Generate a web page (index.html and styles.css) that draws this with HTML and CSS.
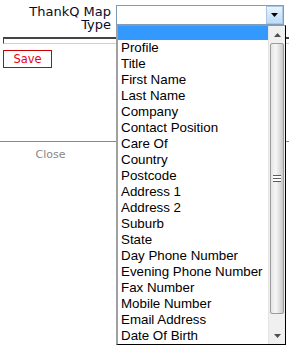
FILE: index.html
```html
<!DOCTYPE html>
<html>
<head>
<meta charset="utf-8">
<link rel="stylesheet" href="styles.css">
</head>
<body>
<div class="page">
  <div class="row">
    <label class="lbl">ThankQ Map Type</label>
    <div class="select">
      <div class="select-btn">
        <svg width="7" height="4" viewBox="0 0 7 4"><polygon points="0,0 7,0 3.5,4" fill="#000"/></svg>
      </div>
      <div class="listbox">
        <div class="options">
          <div class="opt sel"></div>
          <div class="opt">Profile</div>
          <div class="opt">Title</div>
          <div class="opt">First Name</div>
          <div class="opt">Last Name</div>
          <div class="opt">Company</div>
          <div class="opt">Contact Position</div>
          <div class="opt">Care Of</div>
          <div class="opt">Country</div>
          <div class="opt">Postcode</div>
          <div class="opt">Address 1</div>
          <div class="opt">Address 2</div>
          <div class="opt">Suburb</div>
          <div class="opt">State</div>
          <div class="opt">Day Phone Number</div>
          <div class="opt">Evening Phone Number</div>
          <div class="opt">Fax Number</div>
          <div class="opt">Mobile Number</div>
          <div class="opt">Email Address</div>
          <div class="opt">Date Of Birth</div>
        </div>
        <div class="sbar">
          <div class="sbtn">
            <svg width="7" height="4" viewBox="0 0 7 4"><polygon points="0,4 7,4 3.5,0" fill="#505050"/></svg>
          </div>
          <div class="strack">
            <div class="thumb"><span class="grip"></span></div>
          </div>
          <div class="sbtn">
            <svg width="7" height="4" viewBox="0 0 7 4"><polygon points="0,0 7,0 3.5,4" fill="#505050"/></svg>
          </div>
        </div>
      </div>
    </div>
  </div>
  <div class="field"></div>
  <button class="save">Save</button>
  <div class="footer"><span class="close">Close</span></div>
</div>
</body>
</html>
```

FILE: styles.css
```css
html, body {
  margin: 0;
  padding: 0;
  background: #fff;
}
body {
  font-family: "DejaVu Sans", Verdana, sans-serif;
  width: 289px;
  height: 353px;
  overflow: hidden;
}
.page {
  padding-top: 5px;
}
.row {
  display: flex;
  align-items: flex-start;
  gap: 5px;
}
.lbl {
  width: 111px;
  text-align: right;
  font-size: 13px;
  line-height: 13px;
  color: #0a0a1e;
}
.select {
  position: relative;
  width: 168px;
  height: 20px;
  box-sizing: border-box;
  border: 1px solid #7f9db9;
  background: #fff;
  display: flex;
  justify-content: flex-end;
}
.select-btn {
  width: 17px;
  height: 18px;
  box-sizing: border-box;
  border: 1px solid #a9c6e6;
  background: linear-gradient(#eaf4fd, #cfe6fa 50%, #bcdcf6);
  display: flex;
  align-items: center;
  justify-content: center;
}
.listbox {
  position: absolute;
  left: -1px;
  top: 19px;
  width: 170px;
  height: 320px;
  box-sizing: border-box;
  border: 1px solid #000;
  border-top: 1px solid #7f9db9;
  border-left: 2px solid #a0a0a0;
  background: #fff;
  display: flex;
  z-index: 10;
}
.options {
  flex: 1;
  overflow: hidden;
}
.opt {
  height: 16px;
  line-height: 16px;
  padding-left: 3px;
  font-family: "Liberation Sans", Arial, sans-serif;
  font-size: 13.33px;
  color: #000;
  white-space: nowrap;
}
.opt.sel {
  height: 14px;
  background: #3399ff;
}
.sbar {
  width: 17px;
  display: flex;
  flex-direction: column;
  background: #f0f0f0;
  border-left: 1px solid #e4e4e4;
  box-sizing: border-box;
}
.sbtn {
  height: 17px;
  display: flex;
  align-items: center;
  justify-content: center;
  background: #f0f0f0;
}
.strack {
  flex: 1;
  display: flex;
  flex-direction: column;
  padding-bottom: 13px;
  background: #f0f0f0;
}
.thumb {
  height: 271px;
  margin: 0 1px 0 1px;
  box-sizing: border-box;
  border: 1px solid #9c9c9c;
  border-radius: 2px;
  background: linear-gradient(to right, #e4e4e4, #f6f6f6 40%, #dcdcdc 75%, #c8c8c8);
  display: flex;
  align-items: center;
  justify-content: center;
}
.grip {
  display: block;
  width: 8px;
  height: 7px;
  background: linear-gradient(#5a5a5a 0 1px, #fff 1px 3px, #5a5a5a 3px 4px, #fff 4px 6px, #5a5a5a 6px 7px);
}
.field {
  margin: 6px 0 0 3px;
  height: 7px;
  box-sizing: border-box;
  border-top: 2px solid #444;
  border-left: 1px solid #444;
  border-bottom: 1px solid #d0d0d0;
  background: #fff;
}
.save {
  display: block;
  margin: 6px 0 0 3px;
  width: 49px;
  height: 18px;
  padding: 0;
  box-sizing: border-box;
  border: 1px solid #cc0000;
  background: #fff;
  color: #e8001a;
  font-family: "DejaVu Sans", Verdana, sans-serif;
  font-size: 11.5px;
  line-height: 16px;
}
.footer {
  margin-top: 73px;
  border-top: 1px solid #888;
  padding-top: 6px;
}
.close {
  display: block;
  width: 101px;
  text-align: center;
  font-size: 11px;
  line-height: 13px;
  color: #888;
}
```
